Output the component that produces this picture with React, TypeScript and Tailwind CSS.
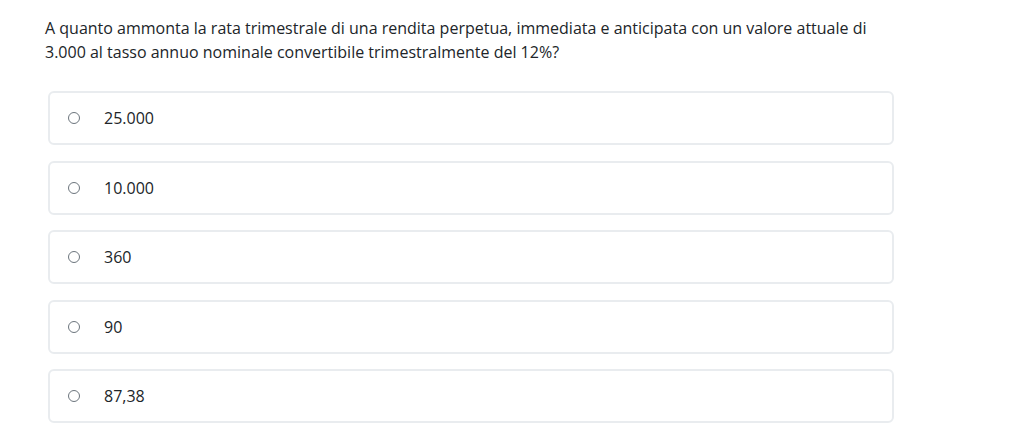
import React from "react";

const options = ["25.000", "10.000", "360", "90", "87,38"];

export default function App() {
  return (
    <div className="w-[1024px] h-[440px] bg-white overflow-hidden" style={{ fontFamily: '"Open Sans", sans-serif' }}>
      <div className="pl-[45px] pt-[16px]">
        <p className="w-[845px] text-[16px] leading-[24px] text-[#212529] m-0">
          A quanto ammonta la rata trimestrale di una rendita perpetua, immediata e anticipata con un valore attuale di 3.000 al tasso annuo nominale convertibile trimestralmente del 12%?
        </p>
      </div>
      <div className="ml-[48px] mt-[27px] w-[846px] flex flex-col gap-[15.5px]">
        {options.map((o) => (
          <label key={o} className="h-[54px] border-[2px] border-[#e9ecef] rounded-[6px] flex items-center pl-[18px]">
            <span className="w-[12px] h-[12px] rounded-full border border-[#6c757d] bg-white shrink-0" />
            <span className="ml-[24px] text-[16px] text-[#212529]">{o}</span>
          </label>
        ))}
      </div>
    </div>
  );
}
